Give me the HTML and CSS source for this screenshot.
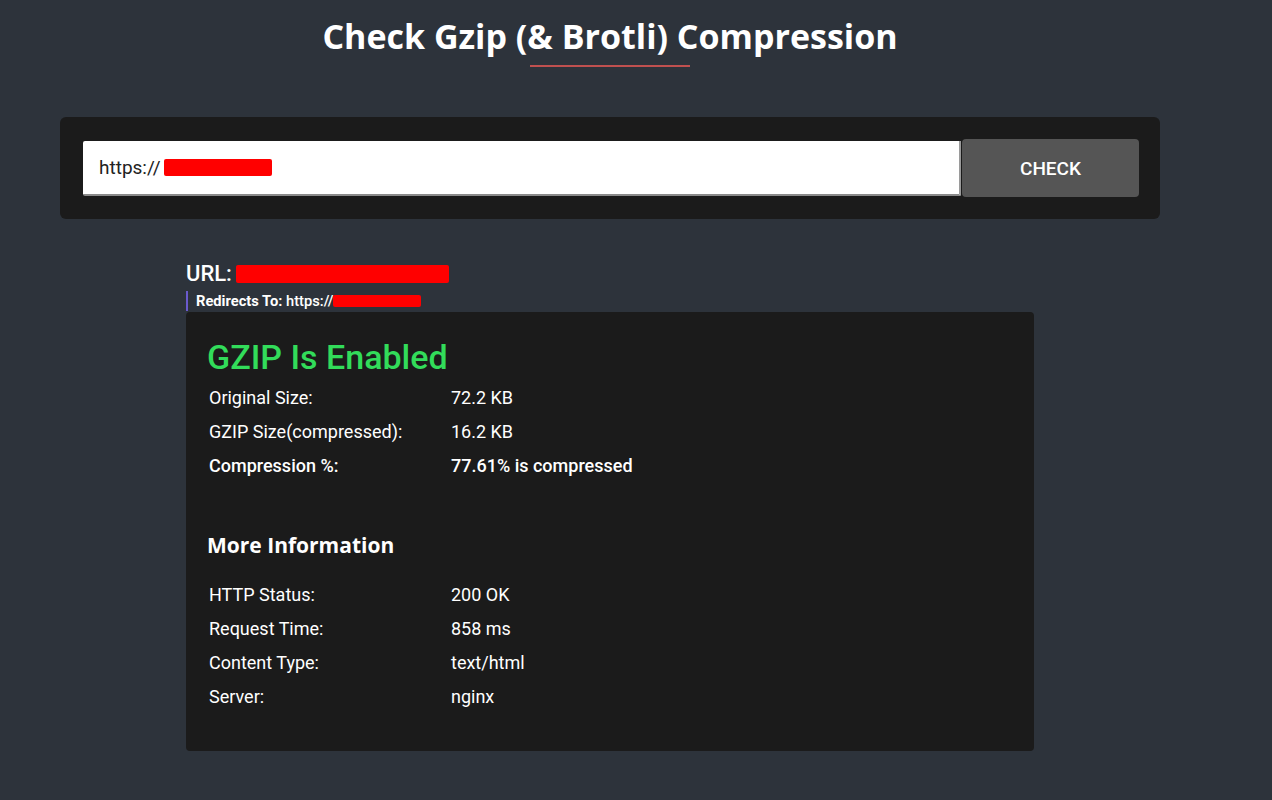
FILE: index.html
```html
<!DOCTYPE html>
<html>
<head>
<meta charset="utf-8">
<link rel="stylesheet" href="styles.css">
</head>
<body>
<div class="page">
  <header class="head">
    <h1 class="title">Check Gzip (&amp; Brotli) Compression</h1>
    <div class="underline"></div>
  </header>
  <form class="search">
    <div class="input"><span>https://</span><span class="redact r-input"></span></div>
    <button class="btn" type="button">CHECK</button>
  </form>
  <section class="results">
    <div class="url"><span>URL:</span><span class="redact r-url"></span></div>
    <div class="redirect"><b>Redirects To:</b> https://<span class="redact r-redir"></span></div>
    <div class="card">
      <h2 class="status">GZIP Is Enabled</h2>
      <div class="rows first">
        <div class="row"><span class="k">Original Size:</span><span class="v">72.2 KB</span></div>
        <div class="row"><span class="k">GZIP Size(compressed):</span><span class="v">16.2 KB</span></div>
        <div class="row strong"><span class="k">Compression %:</span><span class="v">77.61% is compressed</span></div>
      </div>
      <h3 class="more">More Information</h3>
      <div class="rows">
        <div class="row"><span class="k">HTTP Status:</span><span class="v">200 OK</span></div>
        <div class="row"><span class="k">Request Time:</span><span class="v">858 ms</span></div>
        <div class="row"><span class="k">Content Type:</span><span class="v">text/html</span></div>
        <div class="row"><span class="k">Server:</span><span class="v">nginx</span></div>
      </div>
    </div>
  </section>
</div>
</body>
</html>
```
FILE: styles.css
```css
html, body { margin: 0; padding: 0; }
body {
  background: #2d333b;
  color: #fff;
  font-family: Roboto, "Liberation Sans", sans-serif;
  height: 800px;
  overflow: hidden;
}
.page {
  width: 1100px;
  padding: 0 60px;
}
.head {
  display: flex;
  flex-direction: column;
  align-items: center;
  padding-top: 14px;
}
.title {
  margin: 0;
  font-family: "Open Sans", sans-serif;
  font-weight: 700;
  font-size: 34px;
  line-height: 44px;
  color: #fff;
}
.underline {
  width: 160px;
  height: 2px;
  background: #c0504f;
  margin-top: 7px;
}
.search {
  margin: 50px 0 0;
  background: #1b1b1b;
  border-radius: 6px;
  height: 102px;
  padding: 0 21px 0 23px;
  display: flex;
  align-items: center;
  box-sizing: border-box;
}
.input {
  flex: 1;
  height: 55px;
  background: #fff;
  border-right: 2px solid #9a9a9a;
  border-bottom: 2px solid #8a8a8a;
  border-radius: 2px 0 0 2px;
  box-sizing: border-box;
  display: flex;
  align-items: center;
  padding-left: 16px;
  font-size: 19px;
  color: #222;
  margin-top: 1px;
}
.redact { display: inline-block; background: #ff0000; border-radius: 2px; }
.r-input { width: 108px; height: 17px; margin-left: 3px; }
.btn {
  width: 177px;
  height: 58px;
  background: #555555;
  border: none;
  border-radius: 4px;
  color: #fff;
  font-family: Roboto, sans-serif;
  font-weight: 500;
  font-size: 19px;
  margin-left: 1px;
}
.results {
  margin: 43px 0 0 126px;
  width: 848px;
}
.url {
  font-size: 22px;
  font-weight: 500;
  line-height: 24px;
  display: flex;
  align-items: center;
}
.r-url { width: 213px; height: 18px; margin-left: 4px; }
.redirect {
  margin-top: 5px;
  border-left: 2px solid #6a5acd;
  padding-left: 8px;
  font-size: 14.7px;
  font-weight: 500;
  line-height: 20px;
}
.redirect b { font-weight: 700; }
.r-redir { width: 88px; height: 12px; vertical-align: -1px; }
.card {
  margin-top: 1px;
  background: #1b1b1b;
  border-radius: 4px;
  height: 439px;
  box-sizing: border-box;
  padding: 24px 21px;
}
.status {
  margin: 0;
  color: #32dc5a;
  font-size: 34px;
  font-weight: 500;
  line-height: 42px;
}
.rows { display: flex; flex-direction: column; padding-left: 2px; }
.rows.first { margin-top: 2px; }
.row {
  display: flex;
  height: 34px;
  align-items: center;
  font-size: 18px;
  color: #fff;
}
.row .k { width: 242px; }
.row.strong { font-weight: 500; }
.more {
  margin: 48px 0 17px;
  font-family: "Open Sans", sans-serif;
  font-weight: 700;
  font-size: 21px;
  line-height: 30px;
}
```
